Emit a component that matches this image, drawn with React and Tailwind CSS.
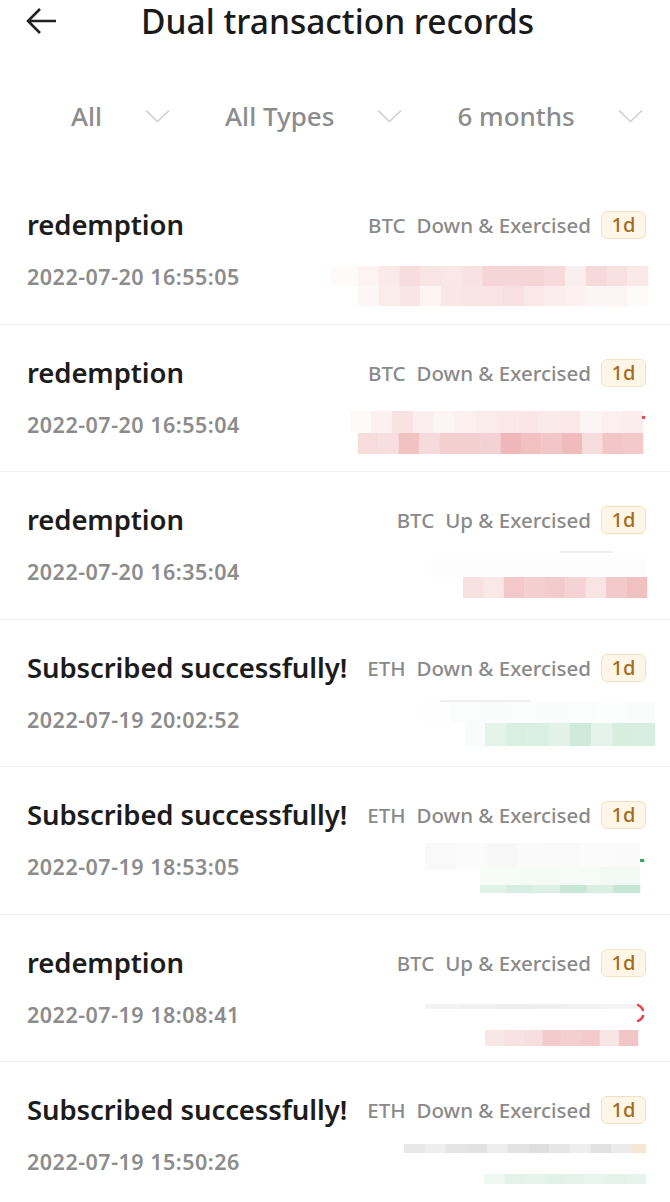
import React from 'react';

const font = { fontFamily: '"Noto Sans", "Open Sans", Arial, sans-serif' };

const records = [
  {
    title: 'redemption',
    coin: 'BTC',
    kind: 'Down & Exercised',
    time: '2022-07-20 16:55:05',
    bands: [
      { y: 89, h: 20, x0: 330, x1: 358, colors: ['#fefafa'] },
      { y: 89, h: 20, x0: 358, x1: 648, colors: ['#fdf3f3', '#fbeaea', '#f7dcdd', '#f9e4e4', '#fae8e8', '#f8e2e2', '#f5d5d6', '#f5d5d6', '#f5d4d5', '#f7dbdc', '#fbeeee', '#f6d9da', '#f8e0e0', '#fbe8e8'] },
      { y: 109, h: 20, x0: 358, x1: 648, colors: ['#fdf6f6', '#fbecec', '#f9e5e5', '#fdf3f3', '#fae6e6', '#f9e4e4', '#f9e3e3', '#f8e0e0', '#fae8e8', '#fbeded', '#fcf0f0', '#fdf5f5', '#fdf4f4', '#fefafa'] },
    ],
  },
  {
    title: 'redemption',
    coin: 'BTC',
    kind: 'Down & Exercised',
    time: '2022-07-20 16:55:04',
    bands: [
      { y: 86, h: 22, x0: 350, x1: 643, colors: ['#fefafa', '#fcf0f0', '#f9e2e2', '#fbeeee', '#fdf5f5', '#fcefef', '#fbecec', '#fae8e8', '#fae6e6', '#fbeaea', '#fae8e8', '#fdf5f5', '#fcefef', '#fbeded'] },
      { y: 108, h: 21, x0: 358, x1: 643, colors: ['#f8dcdc', '#f8dede', '#f2c2c3', '#f7dadb', '#f4cfd0', '#f4cfd0', '#f4d1d2', '#efb7b9', '#f1c1c2', '#f2c5c6', '#f0bbbc', '#f7dcdc', '#f2c5c6', '#f3c9ca'] },
      { y: 91, h: 3, x0: 642, x1: 645, colors: ['#e0505a'] },
    ],
  },
  {
    title: 'redemption',
    coin: 'BTC',
    kind: 'Up & Exercised',
    time: '2022-07-20 16:35:04',
    bands: [
      { y: 79, h: 2, x0: 560, x1: 613, colors: ['#eeeeee'] },
      { y: 86, h: 19, x0: 430, x1: 647, colors: ['#fdfdfd'] },
      { y: 105, h: 21, x0: 463, x1: 647, colors: ['#f9e1e2', '#fae8e8', '#f3c8ca', '#f4cfd0', '#f3cbcc', '#f5d3d5', '#f9e3e3', '#f3c9ca', '#f1c1c2'] },
    ],
  },
  {
    title: 'Subscribed successfully!',
    coin: 'ETH',
    kind: 'Down & Exercised',
    time: '2022-07-19 20:02:52',
    bands: [
      { y: 80, h: 2, x0: 440, x1: 530, colors: ['#efefef'] },
      { y: 82, h: 21, x0: 422, x1: 655, colors: ['#fdfefd', '#fbfdfc', '#fafcfb', '#fbfdfc', '#f9fcfa', '#fbfdfc', '#fcfdfd', '#fafcfb'] },
      { y: 103, h: 23, x0: 465, x1: 485, colors: ['#f8fcfa'] },
      { y: 103, h: 23, x0: 485, x1: 655, colors: ['#e3f3ea', '#d8efe2', '#d9efe3', '#e2f2e9', '#cfeadb', '#e4f3eb', '#d6ede0', '#d8eee2'] },
    ],
  },
  {
    title: 'Subscribed successfully!',
    coin: 'ETH',
    kind: 'Down & Exercised',
    time: '2022-07-19 18:53:05',
    bands: [
      { y: 76, h: 27, x0: 425, x1: 640, colors: ['#f9f9f9', '#fbfbfb', '#f8f8f8', '#fafafa', '#f9f9f9', '#fbfbfb', '#fafafa'] },
      { y: 92, h: 3, x0: 640, x1: 644, colors: ['#3aaa6a'] },
      { y: 100, h: 18, x0: 480, x1: 640, colors: ['#f7fcf9', '#f4fbf7', '#f6fbf8', '#f3faf6'] },
      { y: 118, h: 8, x0: 480, x1: 640, colors: ['#e0f2e8', '#d6eee1', '#dcf0e5', '#c8e7d6', '#d9efe3', '#c5e6d4'] },
    ],
  },
  {
    title: 'redemption',
    coin: 'BTC',
    kind: 'Up & Exercised',
    time: '2022-07-19 18:08:41',
    bands: [
      { y: 89, h: 5, x0: 425, x1: 638, colors: ['#f3f3f3', '#f0f0f0', '#eeeeee', '#efefef', '#f2f2f2', '#f4f4f4'] },
      { y: 115, h: 16, x0: 485, x1: 638, colors: ['#f9e6e6', '#f8e2e2', '#f7dfdf', '#f3cbcc', '#f4cfd0', '#f3cbcc', '#f9e5e5', '#f2c5c6'] },
    ],
    dash: true,
  },
  {
    title: 'Subscribed successfully!',
    coin: 'ETH',
    kind: 'Down & Exercised',
    time: '2022-07-19 15:50:26',
    bands: [
      { y: 82, h: 9, x0: 404, x1: 632, colors: ['#e8e8e8', '#eeeeee', '#e5e5e5', '#e2e2e2', '#eeeeee', '#e3e3e3', '#dedede', '#e6e6e6', '#eeeeee', '#e1e1e1', '#ebebeb'] },
      { y: 82, h: 9, x0: 632, x1: 646, colors: ['#f6e6d4'] },
      { y: 112, h: 10, x0: 484, x1: 646, colors: ['#f0f8f3', '#e3f3ea', '#e6f4ec', '#e1f2e8', '#e5f4eb', '#e8f5ee', '#e3f3ea', '#e7f4ed'] },
    ],
  },
];

const Chevron = () => (
  <svg width="25" height="14" viewBox="0 0 25 14" fill="none">
    <path d="M1 1.5 L12.5 12.5 L24 1.5" stroke="#cfcfcf" strokeWidth="1.6" />
  </svg>
);

const Mosaic = ({ bands, dash }) => (
  <svg width="350" height="70" viewBox="310 65 350 70">
    {bands.map((b, i) => {
      const w = (b.x1 - b.x0) / b.colors.length;
      return b.colors.map((c, j) => (
        <rect key={i + '-' + j} x={b.x0 + j * w} y={b.y} width={w + 0.3} height={b.h} fill={c} />
      ));
    })}
    {dash && (
      <g stroke="#e8434f" strokeWidth="2.5" fill="none" strokeLinecap="round">
        <path d="M638 90 Q642 92 643 95" />
        <path d="M643 101 Q642 104 638 106" />
      </g>
    )}
  </svg>
);

const RecordRow = ({ rec }) => (
  <div className="h-[147.5px] border-b border-[#efefef] pt-[31px]">
    <div className="flex h-[34px] items-center justify-between pl-[27px] pr-[24px]">
      <span className="whitespace-nowrap text-[27.5px] font-semibold leading-[34px] tracking-[-0.1px] text-[#1c1c1c]">{rec.title}</span>
      <div className="flex items-center">
        <span className="text-[20.5px] font-medium leading-[28px] text-[#8a8a8a]">{rec.coin}</span>
        <span className="ml-[11px] whitespace-nowrap text-[20.5px] font-medium leading-[28px] text-[#8a8a8a]">{rec.kind}</span>
        <span className="ml-[10px] flex h-[28px] w-[45px] items-center justify-center rounded-[6px] border border-[#f3e0c2] bg-[#fff6e8] text-[20px] font-medium text-[#a46b1c]">
          1d
        </span>
      </div>
    </div>
    <div className="flex h-[70px] items-center justify-between pl-[27px] pr-[10px]">
      <span className="whitespace-nowrap text-[21.5px] font-semibold leading-[30px] tracking-[0.5px] text-[#8c8c8c]">{rec.time}</span>
      <Mosaic bands={rec.bands} dash={rec.dash} />
    </div>
  </div>
);

const App = () => {
  return (
    <div className="h-[1202px] w-[670px] overflow-hidden bg-white" style={font}>
      <div className="flex h-[42px] items-center">
        <div className="flex w-[80px] justify-center pl-[1px]">
          <svg width="32" height="30" viewBox="0 0 32 30" fill="none">
            <path d="M15 3 L3 15 L15 27 M3 15 L31 15" stroke="#222222" strokeWidth="2.6" strokeLinejoin="miter" />
          </svg>
        </div>
        <h1 className="ml-[61px] whitespace-nowrap text-[33.5px] font-medium leading-[42px] text-[#1a1a1a]">Dual transaction records</h1>
      </div>

      <div className="mt-[38px] flex h-[72px] items-center gap-[55px] pl-[71px]">
        {['All', 'All Types', '6 months'].map((f) => (
          <div key={f} className="flex items-center gap-[43px]">
            <span className="whitespace-nowrap text-[26px] font-medium leading-[34px] text-[#8c8c8c]">{f}</span>
            <Chevron />
          </div>
        ))}
      </div>

      <div className="mt-[25px]">
        {records.map((rec, i) => (
          <RecordRow key={i} rec={rec} />
        ))}
      </div>
    </div>
  );
};

export default App;
